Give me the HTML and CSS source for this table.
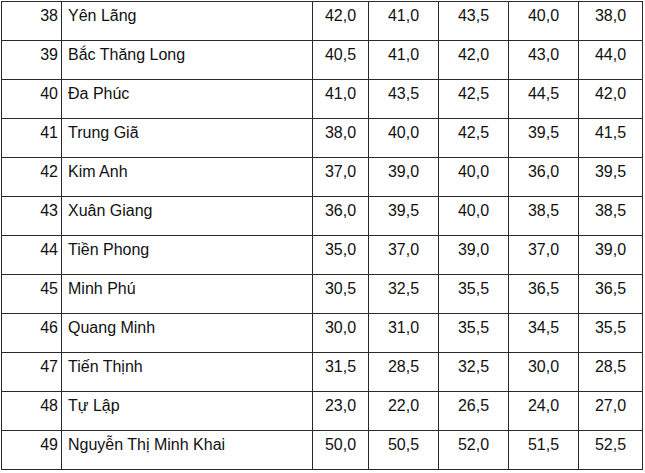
FILE: index.html
```html
<!DOCTYPE html>
<html lang="vi">
<head>
<meta charset="utf-8">
<title>Điểm chuẩn</title>
<link rel="stylesheet" href="styles.css">
</head>
<body>
<div class="grid">
  <div class="no">38</div><div class="name">Yên Lãng</div><div class="v">42,0</div><div class="v">41,0</div><div class="v">43,5</div><div class="v">40,0</div><div class="v">38,0</div>
  <div class="no">39</div><div class="name">Bắc Thăng Long</div><div class="v">40,5</div><div class="v">41,0</div><div class="v">42,0</div><div class="v">43,0</div><div class="v">44,0</div>
  <div class="no">40</div><div class="name">Đa Phúc</div><div class="v">41,0</div><div class="v">43,5</div><div class="v">42,5</div><div class="v">44,5</div><div class="v">42,0</div>
  <div class="no">41</div><div class="name">Trung Giã</div><div class="v">38,0</div><div class="v">40,0</div><div class="v">42,5</div><div class="v">39,5</div><div class="v">41,5</div>
  <div class="no">42</div><div class="name">Kim Anh</div><div class="v">37,0</div><div class="v">39,0</div><div class="v">40,0</div><div class="v">36,0</div><div class="v">39,5</div>
  <div class="no">43</div><div class="name">Xuân Giang</div><div class="v">36,0</div><div class="v">39,5</div><div class="v">40,0</div><div class="v">38,5</div><div class="v">38,5</div>
  <div class="no">44</div><div class="name">Tiền Phong</div><div class="v">35,0</div><div class="v">37,0</div><div class="v">39,0</div><div class="v">37,0</div><div class="v">39,0</div>
  <div class="no">45</div><div class="name">Minh Phú</div><div class="v">30,5</div><div class="v">32,5</div><div class="v">35,5</div><div class="v">36,5</div><div class="v">36,5</div>
  <div class="no">46</div><div class="name">Quang Minh</div><div class="v">30,0</div><div class="v">31,0</div><div class="v">35,5</div><div class="v">34,5</div><div class="v">35,5</div>
  <div class="no">47</div><div class="name">Tiến Thịnh</div><div class="v">31,5</div><div class="v">28,5</div><div class="v">32,5</div><div class="v">30,0</div><div class="v">28,5</div>
  <div class="no">48</div><div class="name">Tự Lập</div><div class="v">23,0</div><div class="v">22,0</div><div class="v">26,5</div><div class="v">24,0</div><div class="v">27,0</div>
  <div class="no">49</div><div class="name">Nguyễn Thị Minh Khai</div><div class="v">50,0</div><div class="v">50,5</div><div class="v">52,0</div><div class="v">51,5</div><div class="v">52,5</div>
</div>
</body>
</html>
```
FILE: styles.css
```css
html, body {
  margin: 0;
  padding: 0;
  background: #ffffff;
}
body {
  font-family: "Liberation Sans", Arial, sans-serif;
  font-size: 16px;
  color: #111111;
}
.grid {
  display: grid;
  grid-template-columns: 59px 250px 55px 69px 69px 69px 63px;
  grid-auto-rows: 38px;
  gap: 1px;
  background: #2a2a2a;
  border: 1px solid #2a2a2a;
  margin: 1px 0 0 1px;
  width: max-content;
}
.grid > div {
  background: #ffffff;
  line-height: 18px;
  padding-top: 5px;
  box-sizing: border-box;
}
.no {
  text-align: right;
  padding-right: 3px;
}
.name {
  padding-left: 6px;
}
.v {
  text-align: center;
}
```
